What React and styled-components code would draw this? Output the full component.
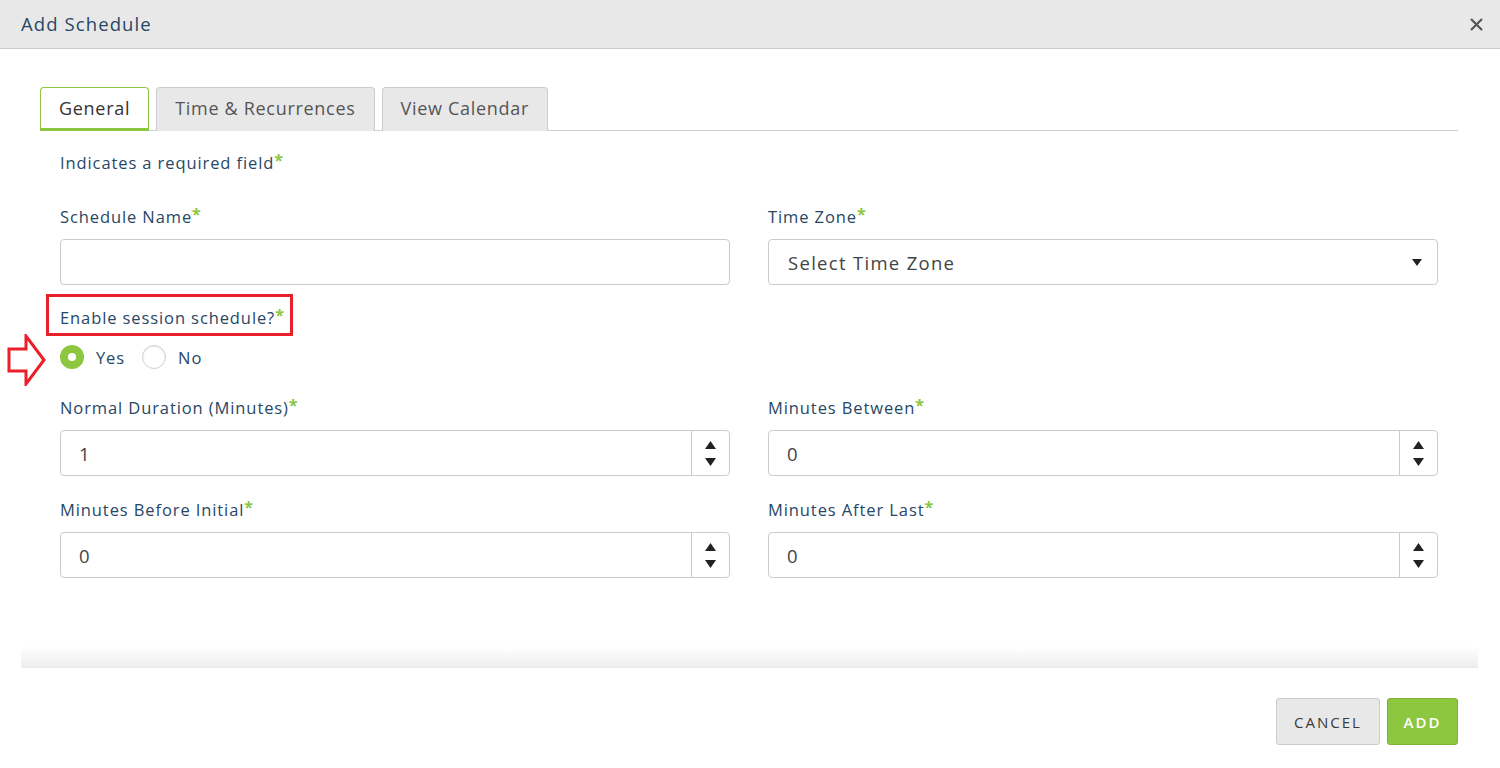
import styled, { createGlobalStyle } from "styled-components";

const Global = createGlobalStyle`
  html, body { margin: 0; padding: 0; background: #ffffff; }
  body { font-family: "Open Sans", Lato, sans-serif; }
  * { box-sizing: border-box; }
`;

const Modal = styled.div`
  width: 1500px;
  height: 768px;
  background: #ffffff;
  display: flex;
  flex-direction: column;
  position: relative;
`;

const Header = styled.div`
  height: 49px;
  background: #e9e8e9;
  border-bottom: 1px solid #c9c9c9;
  display: flex;
  align-items: center;
  justify-content: space-between;
  padding: 0 14px 0 21px;
`;

const Title = styled.h1`
  margin: 0;
  font-size: 18.5px;
  font-weight: 400;
  color: #274766;
  letter-spacing: 1.1px;
  padding-bottom: 2px;
`;

const Close = styled.button`
  border: none;
  background: none;
  padding: 0;
  width: 20px;
  height: 20px;
  display: flex;
  align-items: center;
  justify-content: center;
  cursor: pointer;
`;

const Body = styled.div`
  flex: 1;
  padding: 38px 42px 0 40px;
`;

const TabBar = styled.div`
  display: flex;
  gap: 7px;
  border-bottom: 1px solid #cfcfcf;
  height: 44px;
`;

const Tab = styled.div`
  height: 44px;
  padding: 0 18px ${(p) => (p.$active ? "0" : "3px")};
  display: flex;
  align-items: center;
  font-size: 18px;
  letter-spacing: 0.7px;
  color: ${(p) => (p.$active ? "#333333" : "#555555")};
  background: ${(p) => (p.$active ? "#ffffff" : "#e9e8e9")};
  border: 1px solid ${(p) => (p.$active ? "#8dc63f" : "#cccccc")};
  border-bottom: ${(p) => (p.$active ? "3px solid #8dc63f" : "none")};
  border-radius: 4px 4px 0 0;
`;

const Content = styled.div`
  padding: 22px 20px 0 20px;
`;

const Label = styled.div`
  font-size: 16.5px;
  letter-spacing: 0.9px;
  line-height: 20px;
  color: #274766;
  height: 20px;
`;

const Star = styled.span`
  color: #8dc63f;
  font-size: 16px;
  font-weight: 700;
  position: relative;
  top: -3px;
  letter-spacing: 0;
`;

const Note = styled(Label)`
  margin-bottom: 34px;
`;

const Grid = styled.div`
  display: grid;
  grid-template-columns: 670px 670px;
  column-gap: 38px;
  row-gap: 24px;
`;

const Field = styled.div`
  display: flex;
  flex-direction: column;
  gap: 12px;
`;

const InputBox = styled.div`
  height: 46px;
  border: 1px solid #cccccc;
  border-radius: 4px;
  display: flex;
  align-items: stretch;
  background: #ffffff;
`;

const Value = styled.div`
  flex: 1;
  display: flex;
  align-items: center;
  padding-left: ${(p) => (p.$pad ? p.$pad : "19px")};
  font-size: 18.5px;
  letter-spacing: 1.3px;
  color: #444444;
`;

const Caret = styled.div`
  width: 40px;
  display: flex;
  align-items: center;
  justify-content: center;
`;

const Spinner = styled.div`
  width: 38px;
  border-left: 1px solid #cccccc;
  display: flex;
  flex-direction: column;
  align-items: center;
  justify-content: center;
  gap: 9px;
`;

const Session = styled.div`
  margin-top: 9px;
  position: relative;
`;

const Highlight = styled.div`
  display: inline-block;
  margin-left: -14px;
  border: 3px solid #e8202a;
  padding: 11px 6px 5px 11px;
`;

const Arrow = styled.svg`
  position: absolute;
  left: -53px;
  top: 40px;
`;

const Radios = styled.div`
  display: flex;
  align-items: center;
  height: 24px;
  margin-top: 9px;
  margin-bottom: 29px;
`;

const RadioItem = styled.label`
  display: flex;
  align-items: center;
  gap: 12px;
  margin-right: 17px;
  font-size: 16.5px;
  letter-spacing: 0.9px;
  color: #274766;
`;

const RadioDot = styled.span`
  width: 24px;
  height: 24px;
  border-radius: 50%;
  display: inline-block;
  background: ${(p) => (p.$checked ? "#8dc63f" : "#ffffff")};
  border: ${(p) => (p.$checked ? "none" : "1px solid #cfcfcf")};
  box-shadow: ${(p) => (p.$checked ? "none" : "inset 0 1px 2px rgba(0,0,0,0.08)")};
  position: relative;
  &::after {
    content: "";
    display: ${(p) => (p.$checked ? "block" : "none")};
    position: absolute;
    width: 8px;
    height: 8px;
    border-radius: 50%;
    background: #ffffff;
    left: 8px;
    top: 8px;
  }
`;

const Footer = styled.div`
  margin: 0 22px 0 21px;
  border-top: 1px solid #dcd8e0;
  position: relative;
  display: flex;
  justify-content: flex-end;
  padding: 30px 20px 23px 0;
  gap: 7px;
  &::before {
    content: "";
    position: absolute;
    left: 0;
    right: 0;
    top: -22px;
    height: 22px;
    background: linear-gradient(to bottom, rgba(240,240,240,0), rgba(236,236,236,0.9));
  }
`;

const Button = styled.button`
  height: 47px;
  padding: 0 8px;
  font-family: "Open Sans", Lato, sans-serif;
  font-size: 15px;
  letter-spacing: 2px;
  text-transform: uppercase;
  border-radius: 3px;
  cursor: pointer;
  color: ${(p) => (p.$primary ? "#ffffff" : "#3a3a3a")};
  background: ${(p) => (p.$primary ? "#8dc63f" : "#e9e8e9")};
  border: 1px solid ${(p) => (p.$primary ? "#7db232" : "#cccccc")};
  font-weight: ${(p) => (p.$primary ? 600 : 400)};
  width: ${(p) => (p.$primary ? "71px" : "104px")};
`;

const Up = () => (
  <svg width="11" height="8" viewBox="0 0 11 8"><path d="M5.5 0 L11 8 L0 8 Z" fill="#222" /></svg>
);
const Down = () => (
  <svg width="11" height="8" viewBox="0 0 11 8"><path d="M0 0 L11 0 L5.5 8 Z" fill="#222" /></svg>
);

function NumberField({ label, value }) {
  return (
    <Field>
      <Label>{label}<Star>*</Star></Label>
      <InputBox>
        <Value $pad="18px">{value}</Value>
        <Spinner><Up /><Down /></Spinner>
      </InputBox>
    </Field>
  );
}

export default function App() {
  return (
    <>
      <Global />
      <Modal>
        <Header>
          <Title>Add Schedule</Title>
          <Close aria-label="close">
            <svg width="13" height="13" viewBox="0 0 13 13">
              <path d="M1 1 L12 12 M12 1 L1 12" stroke="#555" strokeWidth="2.2" />
            </svg>
          </Close>
        </Header>
        <Body>
          <TabBar>
            <Tab $active>General</Tab>
            <Tab>Time &amp; Recurrences</Tab>
            <Tab>View Calendar</Tab>
          </TabBar>
          <Content>
            <Note>Indicates a required field<Star>*</Star></Note>
            <Grid>
              <Field>
                <Label>Schedule Name<Star>*</Star></Label>
                <InputBox><Value /></InputBox>
              </Field>
              <Field>
                <Label>Time Zone<Star>*</Star></Label>
                <InputBox>
                  <Value>Select Time Zone</Value>
                  <Caret>
                    <svg width="10" height="7" viewBox="0 0 10 7"><path d="M0 0 L10 0 L5 7 Z" fill="#222" /></svg>
                  </Caret>
                </InputBox>
              </Field>
            </Grid>
            <Session>
              <Highlight>
                <Label>Enable session schedule?<Star>*</Star></Label>
              </Highlight>
              <Arrow width="40" height="52" viewBox="0 0 40 52">
                <path d="M2 15 L19 15 L19 2 L37 26 L19 50 L19 37 L2 37 Z" fill="none" stroke="#e8202a" strokeWidth="3" />
              </Arrow>
              <Radios>
                <RadioItem><RadioDot $checked />Yes</RadioItem>
                <RadioItem><RadioDot />No</RadioItem>
              </Radios>
            </Session>
            <Grid>
              <NumberField label="Normal Duration (Minutes)" value="1" />
              <NumberField label="Minutes Between" value="0" />
              <NumberField label="Minutes Before Initial" value="0" />
              <NumberField label="Minutes After Last" value="0" />
            </Grid>
          </Content>
        </Body>
        <Footer>
          <Button>Cancel</Button>
          <Button $primary>Add</Button>
        </Footer>
      </Modal>
    </>
  );
}
